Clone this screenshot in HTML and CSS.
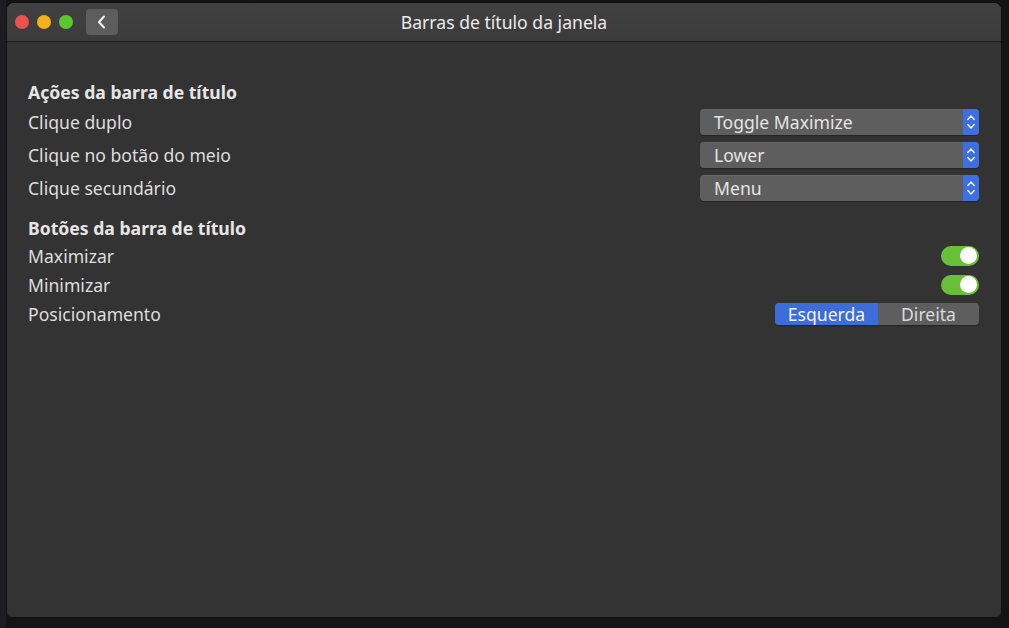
FILE: index.html
```html
<!DOCTYPE html>
<html lang="pt">
<head>
<meta charset="utf-8">
<title>Barras de título da janela</title>
<link rel="stylesheet" href="styles.css">
</head>
<body>
<div class="desktop">
  <div class="window">
    <header class="titlebar">
      <div class="controls">
        <span class="light red"></span>
        <span class="light yellow"></span>
        <span class="light green"></span>
        <button class="back" aria-label="Voltar">
          <svg width="12" height="16" viewBox="0 0 12 16"><path d="M8 2.5 L3 8 L8 13.5" fill="none" stroke="#f2f2f2" stroke-width="2" stroke-linecap="round" stroke-linejoin="round"/></svg>
        </button>
      </div>
      <div class="title">Barras de título da janela</div>
    </header>
    <main class="content">
      <div class="heading">Ações da barra de título</div>
      <div class="row">
        <span class="label">Clique duplo</span>
        <div class="combo"><span class="combo-text">Toggle Maximize</span><span class="stepper"><svg width="10" height="20" viewBox="0 0 10 20"><path d="M1.8 7.5 L5 4 L8.2 7.5 M1.8 12.5 L5 16 L8.2 12.5" fill="none" stroke="#fff" stroke-width="1.3" stroke-linecap="round" stroke-linejoin="round"/></svg></span></div>
      </div>
      <div class="row">
        <span class="label">Clique no botão do meio</span>
        <div class="combo"><span class="combo-text">Lower</span><span class="stepper"><svg width="10" height="20" viewBox="0 0 10 20"><path d="M1.8 7.5 L5 4 L8.2 7.5 M1.8 12.5 L5 16 L8.2 12.5" fill="none" stroke="#fff" stroke-width="1.3" stroke-linecap="round" stroke-linejoin="round"/></svg></span></div>
      </div>
      <div class="row">
        <span class="label">Clique secundário</span>
        <div class="combo"><span class="combo-text">Menu</span><span class="stepper"><svg width="10" height="20" viewBox="0 0 10 20"><path d="M1.8 7.5 L5 4 L8.2 7.5 M1.8 12.5 L5 16 L8.2 12.5" fill="none" stroke="#fff" stroke-width="1.3" stroke-linecap="round" stroke-linejoin="round"/></svg></span></div>
      </div>
      <div class="heading heading-2">Botões da barra de título</div>
      <div class="row row-sm">
        <span class="label">Maximizar</span>
        <span class="switch"><span class="knob"></span></span>
      </div>
      <div class="row row-sm">
        <span class="label">Minimizar</span>
        <span class="switch"><span class="knob"></span></span>
      </div>
      <div class="row row-sm">
        <span class="label">Posicionamento</span>
        <div class="segmented">
          <span class="seg active">Esquerda</span>
          <span class="seg">Direita</span>
        </div>
      </div>
    </main>
  </div>
</div>
</body>
</html>
```
FILE: styles.css
```css
* { box-sizing: border-box; }
html, body { margin: 0; padding: 0; }
body {
  width: 1009px;
  height: 628px;
  overflow: hidden;
  background: #1a1a1c;
  font-family: "Noto Sans", "Open Sans", sans-serif;
  font-size: 17.6px;
  color: #e2e2e2;
}
.desktop {
  padding: 2px 7px 10px 6px;
  height: 628px;
  background: linear-gradient(to right, #1d1d20 0, #1d1d20 6px, #141414 6px);
}
.window {
  height: 616px;
  background: #333333;
  border: 1px solid #111;
  border-radius: 8px 8px 6px 6px;
  overflow: hidden;
  display: flex;
  flex-direction: column;
}
.titlebar {
  height: 39px;
  flex: none;
  background: linear-gradient(#414141, #3b3b3b);
  border-bottom: 1px solid #1c1c1c;
  display: flex;
  align-items: center;
  position: relative;
}
.controls {
  display: flex;
  align-items: center;
  padding-left: 8px;
  gap: 8px;
}
.light {
  width: 14px;
  height: 14px;
  border-radius: 50%;
  display: block;
}
.red { background: #ec5350; }
.yellow { background: #f2b01c; }
.green { background: #5bc832; }
.back {
  margin-left: 5px;
  width: 32px;
  height: 26px;
  border: none;
  border-radius: 4px;
  background: #5d5d5d;
  display: flex;
  align-items: center;
  justify-content: center;
  padding: 0;
}
.title {
  position: absolute;
  left: 0;
  right: 0;
  top: 0;
  bottom: 0;
  display: flex;
  align-items: center;
  justify-content: center;
  pointer-events: none;
  color: #ebebeb;
  font-size: 17.6px;
}
.content {
  padding: 37px 22px 0 21px;
}
.heading {
  height: 26px;
  line-height: 26px;
  font-weight: bold;
  color: #e6e6e6;
}
.heading-2 { margin-top: 11px; }
.row {
  height: 33px;
  display: flex;
  align-items: center;
  justify-content: space-between;
}
.row-sm { height: 29px; }
.label { color: #dedede; }
.combo {
  width: 279px;
  height: 26px;
  background: #5e5e5e;
  border-radius: 4px;
  display: flex;
  align-items: center;
  box-shadow: inset 0 1px 0 rgba(255,255,255,0.05), 0 1px 1px rgba(0,0,0,0.3);
}
.combo-text {
  flex: 1;
  padding-left: 14px;
  color: #e4e4e4;
}
.stepper {
  width: 16px;
  height: 26px;
  background: #3e6fe0;
  border-radius: 0 4px 4px 0;
  display: flex;
  align-items: center;
  justify-content: center;
}
.switch {
  width: 38px;
  height: 20px;
  border-radius: 10px;
  background: #68bf38;
  display: flex;
  align-items: center;
  justify-content: flex-end;
  padding-right: 2px;
}
.knob {
  width: 17px;
  height: 17px;
  border-radius: 50%;
  background: #ffffff;
  display: block;
}
.segmented {
  width: 204px;
  height: 22px;
  border-radius: 4px;
  overflow: hidden;
  display: flex;
  background: #5e5e5e;
  box-shadow: 0 1px 1px rgba(0,0,0,0.3);
}
.seg {
  flex: 1;
  display: flex;
  align-items: center;
  justify-content: center;
  color: #dadada;
  line-height: 22px;
}
.seg.active {
  flex: none;
  width: 103px;
  background: #3c6ddb;
  color: #f4f4f4;
}
```
